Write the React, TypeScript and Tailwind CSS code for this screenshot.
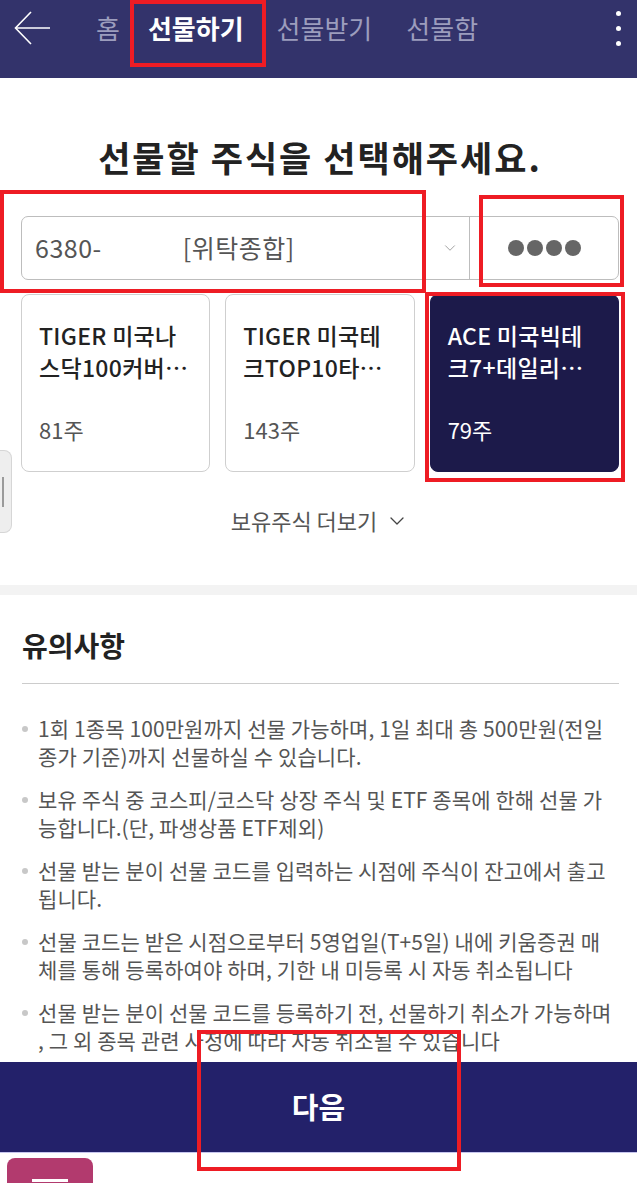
import { ChevronDown } from 'lucide-react';

const notices = [
    ['1회 1종목 100만원까지 선물 가능하며, 1일 최대 총 500만원(전일', '종가 기준)까지 선물하실 수 있습니다.'],
    ['보유 주식 중 코스피/코스닥 상장 주식 및 ETF 종목에 한해 선물 가', '능합니다.(단, 파생상품 ETF제외)'],
    ['선물 받는 분이 선물 코드를 입력하는 시점에 주식이 잔고에서 출고', '됩니다.'],
    ['선물 코드는 받은 시점으로부터 5영업일(T+5일) 내에 키움증권 매', '체를 통해 등록하여야 하며, 기한 내 미등록 시 자동 취소됩니다'],
    ['선물 받는 분이 선물 코드를 등록하기 전, 선물하기 취소가 가능하며', ', 그 외 종목 관련 사정에 따라 자동 취소될 수 있습니다'],
];

const stocks = [
    { name: ['TIGER 미국나', '스닥100커버…'], qty: '81주', active: false },
    { name: ['TIGER 미국테', '크TOP10타…'], qty: '143주', active: false },
    { name: ['ACE 미국빅테', '크7+데일리…'], qty: '79주', active: true },
];

function Header() {
    return (
        <header className="h-[78px] bg-[#33336b]">
            <div className="flex h-[56px] items-center">
                <svg className="ml-[14px] h-[34px] w-[37px]" viewBox="0 0 37 34" fill="none" stroke="#ffffff" strokeWidth="1.6">
                    <path d="M36 17H2" />
                    <path d="M17 1L1.5 17L17 33" />
                </svg>
                <nav className="ml-[45px] flex items-center text-[26px] leading-none text-[#9c9dbd]">
                    <span>홈</span>
                    <span className="ml-[28px] font-bold text-white">선물하기</span>
                    <span className="ml-[33px]">선물받기</span>
                    <span className="ml-[34px]">선물함</span>
                </nav>
                <div className="ml-auto mr-[16px] flex flex-col items-center gap-[10px]">
                    <span className="h-[5px] w-[5px] rounded-full bg-white" />
                    <span className="h-[5px] w-[5px] rounded-full bg-white" />
                    <span className="h-[5px] w-[5px] rounded-full bg-white" />
                </div>
            </div>
        </header>
    );
}

function StockCard({ name, qty, active }: { name: string[]; qty: string; active: boolean }) {
    return (
        <div
            className={
                active
                    ? 'flex h-[178px] flex-col rounded-[8px] border border-[#1c1a4a] bg-[#1c1a4a] px-[17px] pt-[24px] text-white'
                    : 'flex h-[178px] flex-col rounded-[8px] border border-[#cfcfcf] bg-white px-[17px] pt-[24px] text-[#222]'
            }
        >
            <div className="whitespace-nowrap text-[23px] font-medium leading-[32px] tracking-[0.3px]">
                <div>{name[0]}</div>
                <div>{name[1]}</div>
            </div>
            <div className={active ? 'mt-[30px] text-[22px] text-white' : 'mt-[30px] text-[22px] text-[#555]'}>{qty}</div>
        </div>
    );
}

export default function App() {
    return (
        <div className="relative flex h-[1183px] w-[637px] flex-col overflow-hidden bg-white font-['Noto_Sans_CJK_KR',sans-serif]">
            <Header />

            <main className="flex-1 overflow-hidden">
                <section className="pb-[48px] pl-[21px] pr-[18px]">
                    <h1 className="mt-[56px] text-center text-[35px] font-bold leading-[46px] tracking-[2px] text-[#222]">
                        선물할 주식을 선택해주세요.
                    </h1>

                    <div className="mt-[36px] flex h-[64px] rounded-[7px] border border-[#bdbdbd]">
                        <div className="flex flex-1 items-center pl-[13px] text-[25px] tracking-[0.5px] text-[#555]">
                            <span>6380-</span>
                            <span className="ml-[81px]">[위탁종합]</span>
                            <ChevronDown className="ml-auto mr-[10px] h-[18px] w-[18px] text-[#999]" strokeWidth={1.2} />
                        </div>
                        <div className="flex w-[149px] items-center justify-center gap-[3px] border-l border-[#bdbdbd]">
                            <span className="h-[16px] w-[16px] rounded-full bg-[#666]" />
                            <span className="h-[16px] w-[16px] rounded-full bg-[#666]" />
                            <span className="h-[16px] w-[16px] rounded-full bg-[#666]" />
                            <span className="h-[16px] w-[16px] rounded-full bg-[#666]" />
                        </div>
                    </div>

                    <div className="mt-[14px] grid grid-cols-3 gap-[15px]">
                        {stocks.map((s) => (
                            <StockCard key={s.qty} name={s.name} qty={s.qty} active={s.active} />
                        ))}
                    </div>

                    <button type="button" className="mx-auto mt-[32px] flex items-center gap-[8px] text-[22px] text-[#555]">
                        보유주식 더보기
                        <ChevronDown className="h-[24px] w-[24px] text-[#444]" strokeWidth={1.3} />
                    </button>
                </section>

                <div className="h-[10px] bg-[#f3f3f3]" />

                <section className="pl-[22px] pr-[18px]">
                    <h2 className="mt-[30px] text-[28px] font-bold leading-[40px] text-[#222]">유의사항</h2>
                    <div className="mt-[18px] h-px bg-[#cccccc]" />
                    <ul className="mt-[30px] flex flex-col gap-[15px]">
                        {notices.map((n) => (
                            <li key={n[0]} className="flex whitespace-nowrap text-[21px] leading-[28px] tracking-[0.1px] text-[#555]">
                                <span className="mr-[10px] mt-[12px] h-[6px] w-[6px] shrink-0 rounded-full bg-[#c8c8c8]" />
                                <span>
                                    {n[0]}
                                    <br />
                                    {n[1]}
                                </span>
                            </li>
                        ))}
                    </ul>
                </section>
            </main>

            <button type="button" className="h-[90px] shrink-0 bg-[#23216a] text-[29px] font-bold text-white">
                다음
            </button>
            <div className="h-px bg-[#c7c6ee]" />
            <div className="h-[30px] shrink-0 bg-white px-[7px] pt-[5px]">
                <div className="flex h-[30px] w-[86px] items-end justify-center rounded-t-[8px] bg-[#b23a6e] pb-[6px]">
                    <span className="h-[3px] w-[36px] bg-white" />
                </div>
            </div>

            <div className="absolute left-0 top-[450px] flex h-[83px] w-[12px] items-center rounded-r-[8px] border border-l-0 border-[#d6d6d6] bg-[#eeeeee] pl-[2px]">
                <span className="h-[30px] w-[2px] bg-[#9a9a9a]" />
            </div>

            <div className="pointer-events-none absolute left-[130px] top-0 h-[67px] w-[136px] border-[4px] border-[#ee1c24]" />
            <div className="pointer-events-none absolute left-0 top-[190px] h-[103px] w-[426px] border-[4px] border-[#ee1c24]" />
            <div className="pointer-events-none absolute left-[479px] top-[195px] h-[92px] w-[145px] border-[4px] border-[#ee1c24]" />
            <div className="pointer-events-none absolute left-[425px] top-[292px] h-[190px] w-[200px] border-[4px] border-[#ee1c24]" />
            <div className="pointer-events-none absolute left-[197px] top-[1030px] h-[141px] w-[264px] border-[4px] border-[#ee1c24]" />
        </div>
    );
}
